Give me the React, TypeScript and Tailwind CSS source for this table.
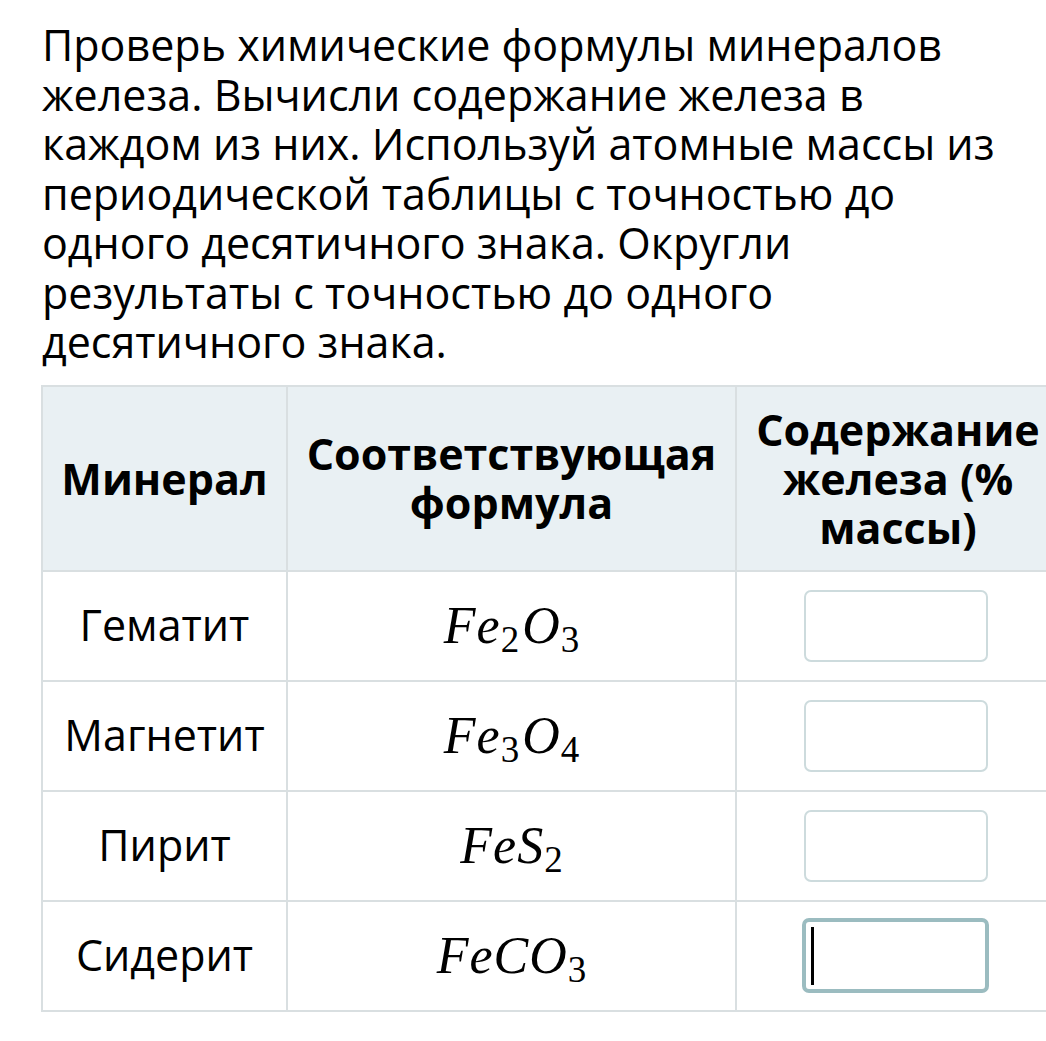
import React from "react";

const rows = [
  { name: "Гематит", fe: "2", x: "O", n: "3" },
  { name: "Магнетит", fe: "3", x: "O", n: "4" },
  { name: "Пирит", fe: "", x: "S", n: "2" },
  { name: "Сидерит", fe: "", x: "CO", n: "3" },
];

function Formula({ fe, x, n }: { fe: string; x: string; n: string }) {
  return (
    <span className="font-['Liberation_Serif',serif] text-[52px] leading-none">
      <i className="tracking-[1px]">Fe</i>
      {fe && <span className="text-[37px] relative top-[9px] mr-[3px]">{fe}</span>}
      <i className="tracking-[1px]">{x}</i>
      <span className="text-[37px] relative top-[9px]">{n}</span>
    </span>
  );
}

export default function App() {
  return (
    <div className="w-[1046px] h-[1041px] overflow-hidden bg-white text-black font-['Open_Sans',sans-serif]">
      <p className="px-[42px] pt-[20px] text-[43px] leading-[49.5px]">
        Проверь химические формулы минералов железа. Вычисли содержание железа в каждом из них. Используй атомные массы из периодической таблицы с точностью до одного десятичного знака. Округли результаты с точностью до одного десятичного знака.
      </p>

      <table className="ml-[41px] mt-[18px] w-[1018px] border-collapse table-fixed">
        <colgroup>
          <col className="w-[245px]" />
          <col className="w-[449px]" />
          <col className="w-[324px]" />
        </colgroup>
        <thead>
          <tr className="h-[185px] bg-[#e9f0f3]">
            {["Минерал", "Соответствующая формула", "Содержание железа (% массы)"].map((h) => (
              <th key={h} className="border-2 border-[#d9dfe1] px-1 text-[43px] leading-[49px] font-bold text-center align-middle">
                {h}
              </th>
            ))}
          </tr>
        </thead>
        <tbody>
          {rows.map((r, i) => (
            <tr key={r.name} className="h-[110px]">
              <td className="border-2 border-[#d9dfe1] text-center text-[43px]">{r.name}</td>
              <td className="border-2 border-[#d9dfe1] text-center">
                <Formula fe={r.fe} x={r.x} n={r.n} />
              </td>
              <td className="border-2 border-[#d9dfe1] pr-[5px]">
                <div className="flex justify-center">
                  {i === 3 ? (
                    <div className="w-[187px] h-[75px] rounded-[7px] border-4 border-[#9bbcc0] flex items-center pl-[5px]">
                      <span className="w-[3px] h-[58px] bg-black" />
                    </div>
                  ) : (
                    <div className="w-[184px] h-[72px] rounded-[7px] border-2 border-[#cddbdd]" />
                  )}
                </div>
              </td>
            </tr>
          ))}
        </tbody>
      </table>
    </div>
  );
}
